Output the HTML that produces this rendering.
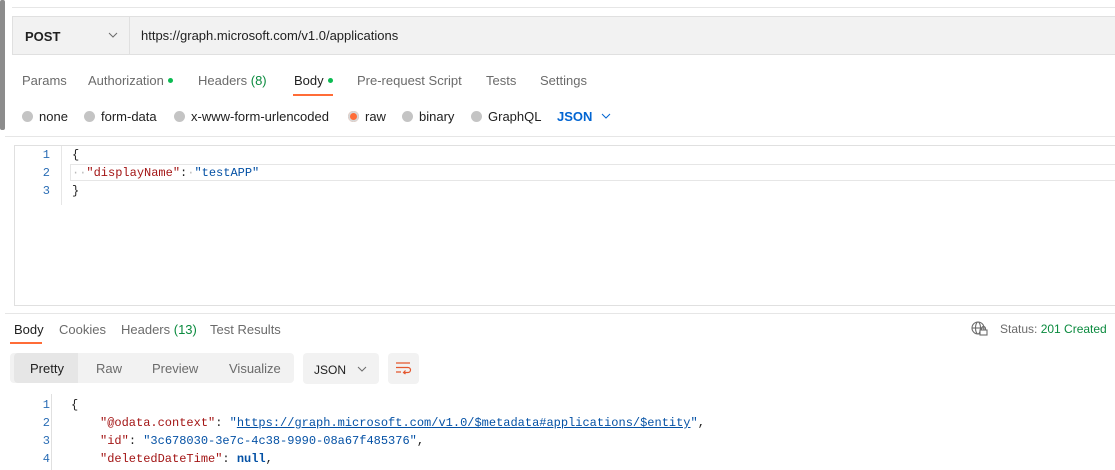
<!DOCTYPE html>
<html><head><style>
body{margin:0;width:1115px;height:470px;background:#fff;font-family:"Liberation Sans",sans-serif;font-size:13px;color:#212121;position:relative;overflow:hidden}
.a{position:absolute;white-space:nowrap}
.mono{font-family:"Liberation Mono",monospace;font-size:12px}
.g{color:#6b6b6b}
.dot{display:inline-block;width:5px;height:5px;border-radius:50%;background:#0cbb52;margin-left:4px;vertical-align:2px}
.rad{display:inline-block;width:11px;height:11px;border-radius:50%;background:#c4c4c4;margin-right:6px;vertical-align:-1px}
.ln{color:#2a6db5;width:20px;text-align:right}
.k{color:#a31515}.s{color:#0451a5}
</style></head><body>
<div class="a" style="left:0;top:0;width:5px;height:130px;background:#8c8c8c;border-radius:2px"></div>
<div class="a" style="left:12px;top:7px;width:1103px;height:1px;background:#e6e6e6"></div>
<div class="a" style="left:12px;top:16px;width:1103px;height:39px;background:#f2f2f2;border:1px solid #e0e0e0;border-right:none;box-sizing:border-box"></div>
<div class="a" style="left:129px;top:17px;width:1px;height:37px;background:#e0e0e0"></div>
<div class="a" style="left:25px;top:29px;font-weight:bold">POST</div>
<svg class="a" style="left:108px;top:32px" width="10" height="6" viewBox="0 0 10 6" fill="none" stroke="#6b6b6b" stroke-width="1"><path d="M1 1l4 4 4-4"/></svg>
<div class="a" style="left:141px;top:28px;color:#212121">https://graph.microsoft.com/v1.0/applications</div>
<div class="a g" style="left:22px;top:73px">Params</div>
<div class="a g" style="left:88px;top:73px">Authorization<span class="dot"></span></div>
<div class="a g" style="left:198px;top:73px">Headers <span style="color:#0a8a3e">(8)</span></div>
<div class="a" style="left:294px;top:73px">Body<span class="dot"></span></div>
<div class="a" style="left:293px;top:94px;width:40px;height:2px;background:#ff6c37"></div>
<div class="a g" style="left:357px;top:73px">Pre-request Script</div>
<div class="a g" style="left:486px;top:73px">Tests</div>
<div class="a g" style="left:540px;top:73px">Settings</div>
<div class="a" style="left:22px;top:109px"><span class="rad"></span>none</div>
<div class="a" style="left:84px;top:109px"><span class="rad"></span>form-data</div>
<div class="a" style="left:174px;top:109px"><span class="rad"></span>x-www-form-urlencoded</div>
<div class="a" style="left:348px;top:109px"><span class="rad" style="background:#ff6c37;box-shadow:inset 0 0 0 2px #d8d8d8"></span>raw</div>
<div class="a" style="left:402px;top:109px"><span class="rad"></span>binary</div>
<div class="a" style="left:471px;top:109px"><span class="rad"></span>GraphQL</div>
<div class="a" style="left:557px;top:109px;color:#0265d2;font-weight:bold">JSON</div>
<svg class="a" style="left:601px;top:113px" width="10" height="6" viewBox="0 0 10 6" fill="none" stroke="#0265d2" stroke-width="1"><path d="M1 1l4 4 4-4"/></svg>
<div class="a" style="left:5px;top:136px;width:1110px;height:1px;background:#e6e6e6"></div>
<div class="a" style="left:14px;top:145px;width:1101px;height:161px;border:1px solid #e0e0e0;border-right:none;box-sizing:border-box"></div>
<div class="a" style="left:61px;top:146px;width:1px;height:59px;background:#e6e6e6"></div>
<div class="a" style="left:70px;top:164px;width:1045px;height:17px;border:1px solid #e6e6e6;border-right:none;box-sizing:border-box"></div>
<div class="a mono ln" style="left:30px;top:148px">1</div>
<div class="a mono ln" style="left:30px;top:166px">2</div>
<div class="a mono ln" style="left:30px;top:184px">3</div>
<div class="a mono" style="left:72px;top:148px">{</div>
<div class="a mono" style="left:72px;top:166px"><span style="color:#bbb">··</span><span class="k">"displayName"</span>:<span style="color:#bbb">·</span><span class="s">"testAPP"</span></div>
<div class="a mono" style="left:72px;top:184px">}</div>
<div class="a" style="left:5px;top:313px;width:1110px;height:1px;background:#e6e6e6"></div>
<div class="a" style="left:14px;top:322px">Body</div>
<div class="a" style="left:10px;top:342px;width:32px;height:2px;background:#ff6c37"></div>
<div class="a g" style="left:59px;top:322px">Cookies</div>
<div class="a g" style="left:121px;top:322px">Headers <span style="color:#0a8a3e">(13)</span></div>
<div class="a g" style="left:210px;top:322px">Test Results</div>
<svg class="a" style="left:971px;top:321px" width="18" height="16" viewBox="0 0 18 16" fill="none" stroke="#6b6b6b" stroke-width="1.1"><circle cx="7" cy="7" r="6"/><ellipse cx="7" cy="7" rx="2.5" ry="6"/><path d="M1 7h12"/><rect x="9" y="9" width="7" height="5" fill="#fff"/><path d="M10.5 9V7.5a2 2 0 0 1 4 0V9"/></svg>
<div class="a g" style="left:1000px;top:322px;font-size:12px">Status: <span style="color:#0a8a3e">201 Created</span></div>
<div class="a" style="left:10px;top:353px;width:284px;height:30px;background:#f2f2f2;border-radius:4px"></div>
<div class="a" style="left:14px;top:353px;width:64px;height:30px;background:#e6e6e6;border-radius:4px 0 0 4px"></div>
<div class="a" style="left:30px;top:361px">Pretty</div>
<div class="a g" style="left:96px;top:361px">Raw</div>
<div class="a g" style="left:152px;top:361px">Preview</div>
<div class="a g" style="left:229px;top:361px">Visualize</div>
<div class="a" style="left:303px;top:353px;width:76px;height:31px;background:#f2f2f2;border-radius:4px"></div>
<div class="a" style="left:314px;top:363px;font-size:12px">JSON</div>
<svg class="a" style="left:357px;top:366px" width="10" height="6" viewBox="0 0 10 6" fill="none" stroke="#6b6b6b" stroke-width="1"><path d="M1 1l4 4 4-4"/></svg>
<div class="a" style="left:388px;top:353px;width:31px;height:31px;background:#f2f2f2;border-radius:4px"></div>
<svg class="a" style="left:395px;top:361px" width="17" height="14" viewBox="0 0 17 14" fill="none" stroke="#e4572e" stroke-width="1.2"><path d="M1 2h14M1 6.5h12a2.5 2.5 0 0 1 0 5H9M1 11h5M10.5 9.5 8.5 11.5 10.5 13"/></svg>
<div class="a" style="left:51px;top:394px;width:1px;height:76px;background:#e0e0e0"></div>
<div class="a mono ln" style="left:30px;top:398px">1</div>
<div class="a mono ln" style="left:30px;top:416px">2</div>
<div class="a mono ln" style="left:30px;top:434px">3</div>
<div class="a mono ln" style="left:30px;top:452px">4</div>
<div class="a mono" style="left:71px;top:398px">{</div>
<div class="a mono" style="left:100px;top:416px"><span class="k">"@odata.context"</span>: <span class="s">"<u>https://graph.microsoft.com/v1.0/$metadata#applications/$entity</u>"</span>,</div>
<div class="a mono" style="left:100px;top:434px"><span class="k">"id"</span>: <span class="s">"3c678030-3e7c-4c38-9990-08a67f485376"</span>,</div>
<div class="a mono" style="left:100px;top:452px"><span class="k">"deletedDateTime"</span>: <span style="color:#0451a5;font-weight:bold">null</span>,</div>
</body></html>
